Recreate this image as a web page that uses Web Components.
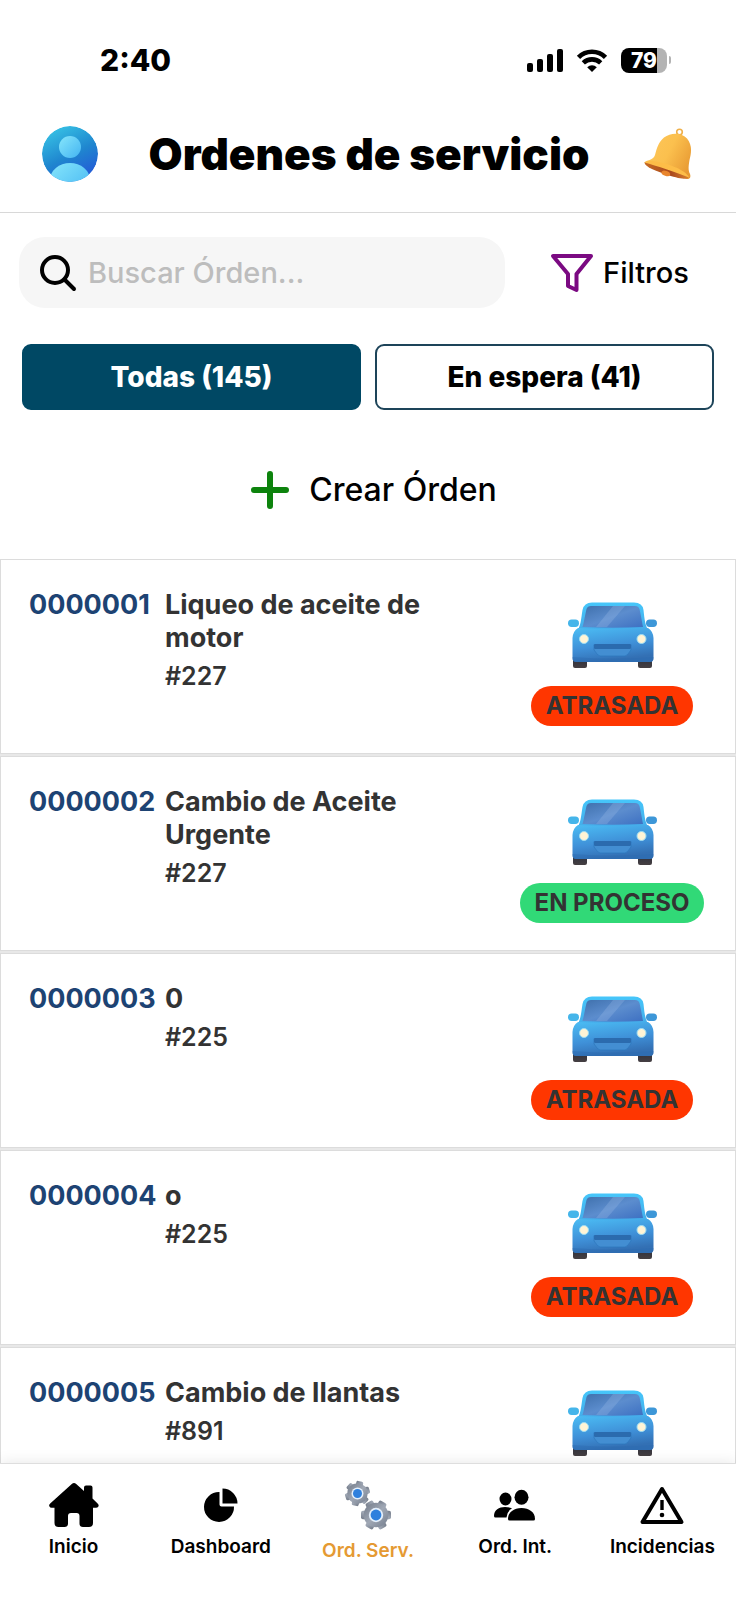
<!DOCTYPE html>
<html lang="es">
<head>
<meta charset="utf-8">
<meta name="viewport" content="width=device-width, initial-scale=1">
<title>Ordenes de servicio</title>
<style>
  body {
    margin: 0;
    background: #fff;
    color: #000;
    font-family: Inter, "Liberation Sans", sans-serif;
  }
</style>
</head>
<body>
<orders-app>
  <status-bar slot="top" time="2:40" battery="79"></status-bar>
  <app-header slot="top">Ordenes de servicio</app-header>
  <search-bar slot="top" placeholder="Buscar Órden...">Filtros</search-bar>
  <filter-tabs slot="top">
    <filter-tab active>Todas (145)</filter-tab>
    <filter-tab>En espera (41)</filter-tab>
  </filter-tabs>
  <create-button slot="top">Crear Órden</create-button>

  <order-card number="0000001" unit="#227" status="ATRASADA">Liqueo de aceite de motor</order-card>
  <order-card number="0000002" unit="#227" status="EN PROCESO">Cambio de Aceite Urgente</order-card>
  <order-card number="0000003" unit="#225" status="ATRASADA">0</order-card>
  <order-card number="0000004" unit="#225" status="ATRASADA">o</order-card>
  <order-card number="0000005" unit="#891" status="ATRASADA">Cambio de llantas</order-card>

  <tab-bar slot="bottom">
    <tab-item icon="home">Inicio</tab-item>
    <tab-item icon="pie">Dashboard</tab-item>
    <tab-item icon="gears" active>Ord. Serv.</tab-item>
    <tab-item icon="people">Ord. Int.</tab-item>
    <tab-item icon="warning">Incidencias</tab-item>
  </tab-bar>
</orders-app>

<script>
// Six toothed gear with a blue hub
function gear(cx, cy, r, turn) {
  let teeth = "";
  const w = r * 0.56;
  for (let i = 0; i < 6; i++) {
    teeth += `<rect x="${cx - w / 2}" y="${cy - r}" width="${w}" height="${r}" rx="${r * 0.13}" transform="rotate(${turn + i * 60} ${cx} ${cy})"/>`;
  }
  return `<g fill="url(#steel)">${teeth}<circle cx="${cx}" cy="${cy}" r="${r * 0.82}"/></g>
    <circle cx="${cx}" cy="${cy}" r="${r * 0.48}" fill="#e4effb"/>
    <circle cx="${cx}" cy="${cy}" r="${r * 0.36}" fill="#2f80dd"/>`;
}

const ICONS = {
  signal: [36, 23, `<rect x="0" y="14" width="6" height="9" rx="2"/><rect x="10" y="10" width="6" height="13" rx="2"/><rect x="20" y="5" width="6" height="18" rx="2"/><rect x="30" y="0" width="6" height="23" rx="2"/>`],
  wifi: [30, 23, `<g fill="none" stroke="#000" stroke-width="4.600"><path d="M1.5 8.4a19 19 0 0 1 27 0"/><path d="M6.300 13.9a12.500 12.500 0 0 1 17.400 0"/></g><path d="M15 23l-4.800-4.800a7 7 0 0 1 9.600 0z"/>`],
  avatar: [56, 56, `
    <defs>
      <linearGradient id="sky" x1=".3" y1="0" x2=".8" y2="1"><stop offset="0" stop-color="#36c0e4"/><stop offset=".5" stop-color="#1f86cf"/><stop offset="1" stop-color="#2453d8"/></linearGradient>
      <linearGradient id="ice" x1="0" y1="0" x2="1" y2="1"><stop offset="0" stop-color="#86e6fb"/><stop offset="1" stop-color="#43b4f2"/></linearGradient>
      <clipPath id="disc"><circle cx="28" cy="28" r="28"/></clipPath>
    </defs>
    <g clip-path="url(#disc)"><circle cx="28" cy="28" r="28" fill="url(#sky)"/><circle cx="28" cy="21" r="11" fill="url(#ice)"/><ellipse cx="28" cy="54" rx="20" ry="17" fill="url(#ice)"/></g>`],
  bell: [48, 51, `
    <defs>
      <linearGradient id="gold" x1="0" y1=".2" x2="1" y2=".7"><stop offset="0" stop-color="#fdc65a"/><stop offset=".5" stop-color="#fbc04e"/><stop offset="1" stop-color="#e89a33"/></linearGradient>
      <linearGradient id="rim" x1="0" y1="0" x2="1" y2="0"><stop offset="0" stop-color="#c56a24"/><stop offset=".6" stop-color="#a9481c"/><stop offset="1" stop-color="#d88130"/></linearGradient>
    </defs>
    <circle cx="35.500" cy="3" r="2.800" fill="none" stroke="#efb04a" stroke-width="1.600"/>
    <path d="M.4 33.500C2 31 9 32 11 26C13 19 14 14 20 8.500C27 3 38 3.500 43 9.500C49 17 47 25 45.500 31C44.500 37 44 41 46 45C47 48 46 50 43 50Z" fill="url(#gold)"/>
    <path d="M.4 33.500C5 32 15 35 25 38.500C35 42 43 46 44.500 48.500C44 51 36 50 24 46C12 42 1 38 .4 33.500Z" fill="url(#rim)"/>
    <path d="M.4 33.500C6 30 18 33 27 36.500C37 40 44 45 45 48.500C38 46 31 43 23 40.500C14 37.500 6 35 .4 33.500Z" fill="#fdbd48"/>
    <ellipse cx="22" cy="44.500" rx="4.500" ry="2.500" fill="#e9852d" transform="rotate(18 22 44)"/>`],
  search: [36, 36, `<g fill="none" stroke="#000" stroke-width="4" stroke-linecap="round"><circle cx="15" cy="15" r="13"/><path d="M24.500 24.500L34 34"/></g>`],
  funnel: [42, 38, `<path d="M2 2h38L25.500 20v16l-8.500-4V20z" fill="none" stroke="#7b0a82" stroke-width="4" stroke-linejoin="round"/>`],
  plus: [38, 38, `<path d="M19 3v32M3 19h32" stroke="#0d830d" stroke-width="6" stroke-linecap="round"/>`],
  car: [89, 67, `
    <defs>
      <linearGradient id="paint" x1="0" y1="0" x2=".3" y2="1"><stop offset="0" stop-color="#4bbdf4"/><stop offset=".6" stop-color="#3f90d8"/><stop offset="1" stop-color="#3370b4"/></linearGradient>
      <linearGradient id="roof" x1="0" y1="0" x2="0" y2="1"><stop offset="0" stop-color="#46c6fa"/><stop offset="1" stop-color="#44abe9"/></linearGradient>
      <linearGradient id="glass" x1="0" y1="0" x2="1" y2="1"><stop offset="0" stop-color="#3f70ac"/><stop offset=".5" stop-color="#5c8dce"/><stop offset="1" stop-color="#3d70c2"/></linearGradient>
      <linearGradient id="tyre" x1="0" y1="0" x2="0" y2="1"><stop offset="0" stop-color="#252b3b"/><stop offset="1" stop-color="#453f42"/></linearGradient>
    </defs>
    <rect x="5" y="52" width="14" height="14" rx="2" fill="url(#tyre)"/>
    <rect x="70" y="52" width="14" height="14" rx="2" fill="url(#tyre)"/>
    <rect x="0" y="17.500" width="11" height="7.500" rx="3.700" fill="#45b5ea"/>
    <rect x="78" y="17.500" width="11" height="7.500" rx="3.700" fill="#3d97d8"/>
    <path d="M8 30C13 25 13 17 14.500 8Q16 .5 24 .5H66Q74.500 .5 75.500 8C76.500 17 77 25 82 30Z" fill="url(#roof)"/>
    <path d="M14.500 25C16 20 17 13 18.500 7Q19.500 4 23 4H67Q70.500 4 71.500 7C73 13 74 20 75 25Q45 26.500 14.500 25Z" fill="url(#glass)"/>
    <path d="M28 25L45 4H57L39 25Z" fill="#a9c4ec" opacity=".25"/>
    <path d="M10 26Q45 28 80 26Q85 29 85.500 36V56Q85.500 60 82 60H8Q4.500 60 4.500 56V36Q5 29 10 26Z" fill="url(#paint)"/>
    <path d="M4.500 55Q45 58 85.500 55V57Q85 60 82 60H8Q5 60 4.500 57Z" fill="#2b68b0" opacity=".4"/>
    <path d="M26 42.500H63V48Q59 54 57 54H32Q30 54 26 48Z" fill="#438ed2" stroke="#2d76bb" stroke-width=".7"/>
    <rect x="26" y="42" width="37" height="5" rx="1.500" fill="#2b6bae"/>
    <circle cx="16" cy="37" r="4.500" fill="#fff4d5" stroke="#9bdcf4" stroke-width="1"/>
    <circle cx="73.500" cy="37" r="4.500" fill="#fff4d5" stroke="#9bdcf4" stroke-width="1"/>`],
  home: [50, 44, `<path d="M22.800 1Q25 -1 27.200 1L35 8V4.500Q35 2.500 37 2.500H41.500Q43.500 2.500 43.500 4.500V15.500L48.600 20.500Q50.500 22.500 49 24Q48.500 24.800 47 24.800H44V40Q44 44 40 44H34Q30.500 44 30.500 40.500V33Q30.500 30 27.500 30H22Q19 30 19 33V40.500Q19 44 15.500 44H9.500Q5.500 44 5.500 40V24.800H2.500Q1 24.800 .5 23.500Q-.5 22 1.200 20.500Z"/>`],
  pie: [34, 34, `<path d="M15.500 4A15 15 0 1 0 30 18.500H17.500Q15.500 18.500 15.500 16.500Z"/><path d="M18.500 .5A15 15 0 0 1 33.500 15.500H18.500Z"/>`],
  gears: [48, 49, `<defs><linearGradient id="steel" x1="0" y1="0" x2="1" y2="1"><stop offset="0" stop-color="#717987"/><stop offset=".5" stop-color="#a0a8b5"/><stop offset="1" stop-color="#747d8d"/></linearGradient></defs>${gear(13.5, 12.500, 12.500, 12)}${gear(32, 34, 15, 30)}`],
  people: [42, 31, `<ellipse cx="11.500" cy="9" rx="6" ry="6.500"/><ellipse cx="27.500" cy="7.300" rx="7" ry="7.500"/><path d="M0 26C0 20 5 17 11 17Q15 17 18 18.300Q13 21.500 12.500 27.500H1.500Q0 27.500 0 26Z"/><path d="M14 29C14 22 20 18 27.500 18S41 22 41 29Q41 30.500 39.500 30.500H15.500Q14 30.500 14 29Z"/>`],
  warning: [44, 38, `<path d="M22 3L41.500 36H2.500Z" fill="none" stroke="#000" stroke-width="4" stroke-linejoin="round"/><path d="M20.300 14H23.700V24H20.300Z"/><circle cx="22" cy="29" r="2.300"/>`]
};

class UiIcon extends HTMLElement {
  constructor() {
    super();
    this.root = this.attachShadow({ mode: "open" });
  }

  connectedCallback() {
    const [w, h, shapes] = ICONS[this.getAttribute("name")];
    this.root.innerHTML = `
      <style>
        :host { display: block; flex: none; }
        svg { display: block; overflow: visible; }
      </style>
      <svg width="${w}" height="${h}" viewBox="0 0 ${w} ${h}" aria-hidden="true">${shapes}</svg>
    `;
  }
}
customElements.define("ui-icon", UiIcon);

// Common base: every element below gives its own html() and css()
class UiElement extends HTMLElement {
  constructor() {
    super();
    this.root = this.attachShadow({ mode: "open" });
  }

  connectedCallback() {
    this.root.innerHTML = `<style>* { box-sizing: border-box; } ${this.css()}</style>${this.html()}`;
  }
}

class OrdersApp extends UiElement {
  html() {
    return `
      <slot name="top"></slot>
      <main><slot></slot></main>
      <slot name="bottom"></slot>
    `;
  }

  css() {
    return `
      :host { display: flex; flex-direction: column; height: 100vh; overflow: hidden; }
      main {
        flex: 1;
        min-height: 0;
        overflow: hidden;
        display: flex;
        flex-direction: column;
        gap: 2px;
        background: #e8e8e8;
      }
    `;
  }
}
customElements.define("orders-app", OrdersApp);

class StatusBar extends UiElement {
  html() {
    return `
      <time>${this.getAttribute("time")}</time>
      <div class="icons">
        <ui-icon name="signal"></ui-icon>
        <ui-icon name="wifi"></ui-icon>
        <div class="battery"><span>${this.getAttribute("battery")}</span></div>
      </div>
    `;
  }

  css() {
    return `
      :host {
        display: flex;
        justify-content: space-between;
        align-items: center;
        padding: 40px 65px 0 100px;
        line-height: 40px;
      }
      time { font-size: 30px; font-weight: 800; }
      .icons { display: flex; align-items: center; gap: 14px; }
      .battery { display: flex; align-items: center; gap: 2px; }
      .battery span {
        width: 46px;
        height: 25px;
        border-radius: 8px;
        background: linear-gradient(to right, #000 79%, #b3b3b3 79%);
        color: #fff;
        font-size: 21px;
        font-weight: 800;
        line-height: 25px;
        text-align: center;
      }
      .battery::after {
        content: "";
        width: 2px;
        height: 8px;
        border-radius: 0 2px 2px 0;
        background: #b3b3b3;
      }
    `;
  }
}
customElements.define("status-bar", StatusBar);

class AppHeader extends UiElement {
  html() {
    return `
      <button aria-label="Perfil"><ui-icon name="avatar"></ui-icon></button>
      <h1><slot></slot></h1>
      <button aria-label="Notificaciones"><ui-icon name="bell"></ui-icon></button>
    `;
  }

  css() {
    return `
      :host {
        display: flex;
        justify-content: space-between;
        align-items: center;
        padding: 46px 40px 30px 42px;
        border-bottom: 1px solid #d8d8d8;
      }
      button {
        display: flex;
        justify-content: center;
        width: 56px;
        border: 0;
        padding: 0;
        background: none;
      }
      h1 { margin: 0; font-size: 44px; font-weight: 900; line-height: 56px; }
    `;
  }
}
customElements.define("app-header", AppHeader);

class SearchBar extends UiElement {
  html() {
    return `
      <label>
        <ui-icon name="search"></ui-icon>
        <input type="text" aria-label="Buscar" placeholder="${this.getAttribute("placeholder")}">
      </label>
      <button><ui-icon name="funnel"></ui-icon><slot></slot></button>
    `;
  }

  css() {
    return `
      :host { display: flex; padding: 24px 19px 0; font-size: 29px; font-weight: 500; }
      label {
        flex: 1;
        min-width: 0;
        display: flex;
        align-items: center;
        gap: 12px;
        height: 71px;
        padding: 0 21px;
        border-radius: 26px;
        background: #f6f6f6;
      }
      input {
        flex: 1;
        min-width: 0;
        border: 0;
        padding: 0;
        outline: 0;
        background: none;
        font: inherit;
      }
      input::placeholder { color: #bdbdbd; opacity: 1; }
      button {
        display: flex;
        align-items: center;
        justify-content: center;
        gap: 10px;
        width: 212px;
        padding: 0 0 0 18px;
        border: 0;
        background: none;
        color: #000;
        font: inherit;
      }
    `;
  }
}
customElements.define("search-bar", SearchBar);

class FilterTabs extends UiElement {
  html() {
    return `<slot></slot>`;
  }

  css() {
    return `:host { display: flex; gap: 14px; padding: 36px 22px 0; }`;
  }
}
customElements.define("filter-tabs", FilterTabs);

class FilterTab extends UiElement {
  html() {
    return `<button aria-pressed="${this.hasAttribute("active")}"><slot></slot></button>`;
  }

  css() {
    return `
      :host { display: block; flex: 1; }
      button {
        width: 100%;
        height: 66px;
        border: 2px solid #1d4459;
        border-radius: 9px;
        background: #fff;
        color: #000;
        font: inherit;
        font-size: 28px;
        font-weight: 800;
      }
      :host([active]) button { border-color: #004864; background: #004864; color: #fff; }
    `;
  }
}
customElements.define("filter-tab", FilterTab);

class CreateButton extends UiElement {
  html() {
    return `<button><ui-icon name="plus"></ui-icon><slot></slot></button>`;
  }

  css() {
    return `
      :host { display: flex; justify-content: center; padding: 55px 0 45px; }
      button {
        display: flex;
        align-items: center;
        gap: 20px;
        height: 49px;
        padding: 0 0 0 12px;
        border: 0;
        background: none;
        color: #000;
        font: inherit;
        font-size: 32px;
        font-weight: 500;
      }
    `;
  }
}
customElements.define("create-button", CreateButton);

class OrderCard extends UiElement {
  html() {
    const status = this.getAttribute("status");
    return `
      <article>
        <span class="number">${this.getAttribute("number")}</span>
        <div class="text">
          <h2><slot></slot></h2>
          <p>${this.getAttribute("unit")}</p>
        </div>
        <div class="state">
          <ui-icon name="car"></ui-icon>
          <span class="badge ${status === "EN PROCESO" ? "running" : ""}">${status}</span>
        </div>
      </article>
    `;
  }

  css() {
    return `
      :host { display: block; flex: none; }
      article {
        display: grid;
        grid-template-columns: 136px minmax(0, 1fr) 192px;
        height: 195px;
        padding: 28px 27px 0 28px;
        border: 1px solid #dcdcdc;
        background: #fff;
        color: #333;
      }
      .number, h2 { margin: 0; font-size: 27px; font-weight: 700; line-height: 33px; }
      .number { color: #1d4373; }
      .text { padding-right: 44px; }
      p { margin: 6px 0 0; font-size: 25px; font-weight: 600; line-height: 33px; }
      .state { display: flex; flex-direction: column; align-items: center; gap: 17px; padding-top: 14px; }
      .badge {
        padding: 0 15px;
        border-radius: 20px;
        background: #ff3600;
        font-size: 24px;
        font-weight: 700;
        line-height: 40px;
        white-space: nowrap;
      }
      .running { background: #31d977; }
    `;
  }
}
customElements.define("order-card", OrderCard);

class TabBar extends UiElement {
  html() {
    return `<nav><slot></slot></nav>`;
  }

  css() {
    return `
      :host { display: block; position: relative; }
      nav {
        display: flex;
        height: 137px;
        border-top: 1px solid #dedede;
        background: #fff;
        box-shadow: 0 0 14px rgba(0, 0, 0, 0.1);
      }
    `;
  }
}
customElements.define("tab-bar", TabBar);

class TabItem extends UiElement {
  html() {
    return `
      <a href="#">
        <span class="icon"><ui-icon name="${this.getAttribute("icon")}"></ui-icon></span>
        <slot></slot>
      </a>
    `;
  }

  css() {
    return `
      :host { display: block; flex: 1 1 0; min-width: 0; }
      a {
        display: flex;
        flex-direction: column;
        align-items: center;
        padding-top: 17px;
        color: #000;
        font-size: 19px;
        font-weight: 600;
        line-height: 24px;
        text-decoration: none;
        white-space: nowrap;
      }
      .icon { display: flex; align-items: center; height: 48px; margin-bottom: 6px; }
      :host([active]) a { color: #e59a33; }
      :host([active]) .icon { margin-bottom: 10px; }
    `;
  }
}
customElements.define("tab-item", TabItem);
</script>
</body>
</html>
